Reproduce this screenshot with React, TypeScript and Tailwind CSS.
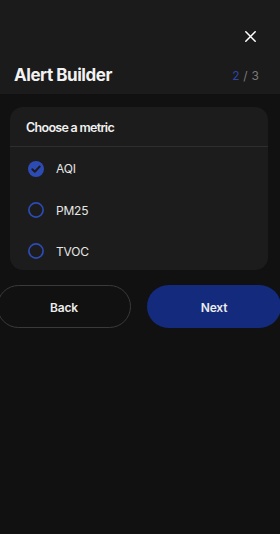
import { useState } from "react";

const metrics = ["AQI", "PM25", "TVOC"];

function CheckCircle({ checked }: { checked: boolean }) {
  if (checked) {
    return (
      <svg width="16" height="16" viewBox="0 0 16 16" aria-hidden>
        <circle cx="8" cy="8" r="8" fill="#2d4bb4" />
        <path
          d="M4.3 8.3l2.5 2.5 4.9-5.3"
          fill="none"
          stroke="#1c1c1c"
          strokeWidth="2"
          strokeLinecap="round"
          strokeLinejoin="round"
        />
      </svg>
    );
  }
  return (
    <svg width="16" height="16" viewBox="0 0 16 16" aria-hidden>
      <circle cx="8" cy="8" r="7.1" fill="none" stroke="#2d4bb4" strokeWidth="1.7" />
    </svg>
  );
}

export default function App() {
  const [selected, setSelected] = useState("AQI");

  return (
    <div
      className="w-[280px] h-[534px] bg-[#111111] text-white overflow-hidden"
      style={{ fontFamily: "Inter, 'Noto Sans', sans-serif" }}
    >
      <header className="h-[94px] bg-[#1b1b1b] flex flex-col pt-[26px]">
        <div className="flex justify-end pr-[20px]">
          <button type="button" aria-label="Close" className="w-[20px] h-[20px] flex items-center justify-center">
            <svg width="11" height="11" viewBox="0 0 11 11">
              <path d="M0.8 0.8l9.4 9.4M10.2 0.8L0.8 10.2" stroke="#ffffff" strokeWidth="1.5" strokeLinecap="round" />
            </svg>
          </button>
        </div>
        <div className="mt-[18px] h-[24px] flex items-center justify-between pl-[14px] pr-[21px]">
          <h1 className="text-[17px] font-bold tracking-[-0.45px] m-0 text-[#f2f2f2]">Alert Builder</h1>
          <span className="text-[12px] text-[#7a7a7a] tracking-[0.2px]">
            <span className="text-[#2d46a8]">2</span> / 3
          </span>
        </div>
      </header>

      <div className="pt-[13px]">
        <div className="ml-[10px] mr-[12px] h-[163px] bg-[#1c1c1c] rounded-[13px] overflow-hidden">
          <div className="h-[40px] flex items-center pt-[3px] px-[16px] border-b border-[#2e2e2e]">
            <h2 className="text-[12.5px] font-semibold tracking-[-0.7px] m-0 text-[#f0f0f0]">Choose a metric</h2>
          </div>
          <ul className="m-0 p-0 list-none">
            {metrics.map((m) => (
              <li key={m}>
                <button
                  type="button"
                  onClick={() => setSelected(m)}
                  className="w-full h-[41.4px] flex items-center gap-[12px] pl-[18px] pt-[2px] text-left"
                >
                  <CheckCircle checked={selected === m} />
                  <span className="text-[12px] tracking-[-0.2px] text-[#e6e6e6] pt-[1px]">{m}</span>
                </button>
              </li>
            ))}
          </ul>
        </div>

        <div className="mt-[15px] ml-[-3px] w-[284px] flex gap-[16px]">
          <button
            type="button"
            className="w-[134px] h-[43px] pt-[3px] rounded-full border border-[#3a3a3a] text-[12px] font-semibold tracking-[-0.2px] text-[#ececec]"
          >
            Back
          </button>
          <button
            type="button"
            className="w-[134px] h-[43px] pt-[3px] rounded-full bg-[#142a7c] text-[12px] font-semibold tracking-[-0.2px] text-[#ececec]"
          >
            Next
          </button>
        </div>
      </div>
    </div>
  );
}
